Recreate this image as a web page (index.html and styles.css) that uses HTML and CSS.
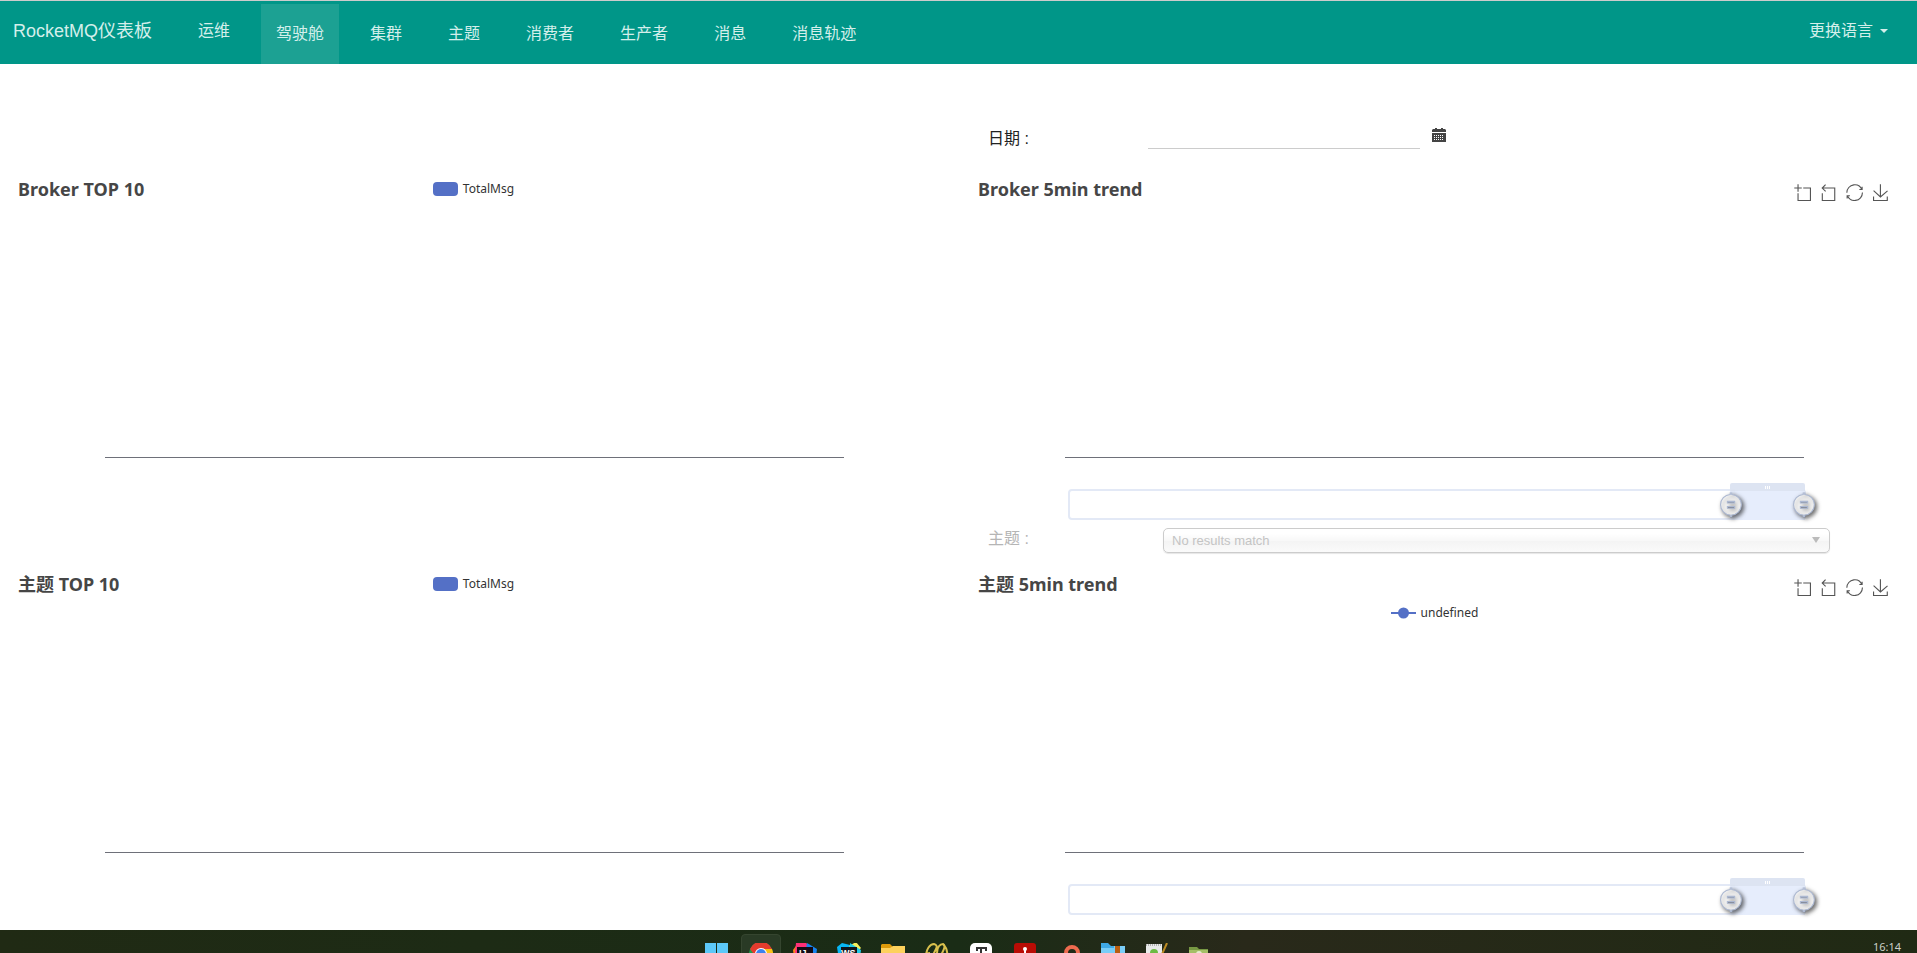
FILE: index.html
```html
<!DOCTYPE html>
<html lang="zh-CN">
<head>
<meta charset="utf-8">
<title>RocketMQ仪表板</title>
<link rel="stylesheet" href="styles.css">
</head>
<body>
<svg class="defs" aria-hidden="true">
  <symbol id="i-zoom" viewBox="-1 -1 61 61"><path d="M0,13.5h26.9 M13.5,26.9V0 M32.1,13.5H58V58H13.5 V32.1"/></symbol>
  <symbol id="i-back" viewBox="2 -1 61 61"><path d="M22,1.4L9.9,13.5l12.3,12.3 M10.3,13.5H54.9v44.6 H10.3v-26"/></symbol>
  <symbol id="i-restore" viewBox="-1 -1 61 61"><path d="M47,18.9h9.8V8.7 M56.3,20.1 C52.1,9,40.5,0.6,26.8,2.1C12.6,3.7,1.6,16.2,2.1,30.6 M13,41.1H3.1v10.2 M3.7,39.9c4.2,11.1,15.8,19.5,29.5,18 c14.2-1.6,25.2-14.1,24.7-28.5"/></symbol>
  <symbol id="i-save" viewBox="-1 -1 61 61"><path d="M4.7,22.9L29.3,45.5L54.7,23.4M4.6,43.6L4.6,58L53.8,58L53.8,43.6M29.2,45.1L29.2,0"/></symbol>
  <symbol id="i-handle" viewBox="0 10 20 23"><path d="M10.7,11.9v-1.3H9.3v1.3c-4.9,0.3-8.8,4.4-8.8,9.4c0,5,3.9,9.1,8.8,9.4v1.3h1.3v-1.3c4.9-0.3,8.8-4.4,8.8-9.4C19.5,16.3,15.6,12.2,10.7,11.9z M13.3,24.4H6.7V23h6.6V24.4z M13.3,19.6H6.7v-1.4h6.6V19.6z"/></symbol>
</svg>

<header class="navbar">
  <a class="nav-link brand" href="#">RocketMQ仪表板</a>
  <a class="nav-link" href="#">运维</a>
  <nav class="tabs">
    <a class="nav-link active" href="#">驾驶舱</a>
    <a class="nav-link" href="#">集群</a>
    <a class="nav-link" href="#">主题</a>
    <a class="nav-link" href="#">消费者</a>
    <a class="nav-link" href="#">生产者</a>
    <a class="nav-link" href="#">消息</a>
    <a class="nav-link" href="#">消息轨迹</a>
  </nav>
  <button class="lang" type="button">更换语言<span class="caret"></span></button>
</header>

<main class="dashboard">
  <form class="filter filter-date">
    <label for="date">日期 :</label>
    <input id="date" type="text">
    <button class="calendar" type="button" aria-label="日历">
      <svg viewBox="0 0 14 15"><path fill="#444" d="M1 1h2V0h2v1h4V0h2v1h2l1 1v2H0V2zM0 5h14v9H0z"/><path stroke="#fff" stroke-dasharray="1 1" d="M2 7.500h10M2 9.500h10M2 11.500h10"/></svg>
    </button>
  </form>

  <section class="chart chart-left">
    <div class="chart-head">
      <h2>Broker TOP 10</h2>
      <div class="legend"><span class="swatch"></span>TotalMsg</div>
    </div>
    <div class="plot"></div>
  </section>

  <section class="chart">
    <div class="chart-head">
      <h2>Broker 5min trend</h2>
      <div class="toolbox">
        <button type="button" aria-label="zoom"><svg><use href="#i-zoom"/></svg></button>
        <button type="button" aria-label="back"><svg><use href="#i-back"/></svg></button>
        <button type="button" aria-label="restore"><svg><use href="#i-restore"/></svg></button>
        <button type="button" aria-label="save"><svg><use href="#i-save"/></svg></button>
      </div>
    </div>
    <div class="plot"></div>
    <div class="slider">
      <div class="window">
        <div class="grip"><i></i><i></i><i></i></div>
        <svg class="handle start"><use class="face" href="#i-handle"/><use class="rim" href="#i-handle"/></svg>
        <svg class="handle end"><use class="face" href="#i-handle"/><use class="rim" href="#i-handle"/></svg>
      </div>
    </div>
  </section>

  <form class="filter filter-topic">
    <label for="topic">主题 :</label>
    <div class="select-box">
      <select id="topic" disabled><option>No results match</option></select>
    </div>
  </form>

  <section class="chart chart-left">
    <div class="chart-head">
      <h2>主题 TOP 10</h2>
      <div class="legend"><span class="swatch"></span>TotalMsg</div>
    </div>
    <div class="plot"></div>
  </section>

  <section class="chart">
    <div class="chart-head">
      <h2>主题 5min trend</h2>
      <div class="toolbox">
        <button type="button" aria-label="zoom"><svg><use href="#i-zoom"/></svg></button>
        <button type="button" aria-label="back"><svg><use href="#i-back"/></svg></button>
        <button type="button" aria-label="restore"><svg><use href="#i-restore"/></svg></button>
        <button type="button" aria-label="save"><svg><use href="#i-save"/></svg></button>
      </div>
    </div>
    <div class="legend legend-line"><svg class="marker" viewBox="0 0 25 12"><path stroke="#5470c6" stroke-width="2" d="M0 6h25"/><circle cx="12.500" cy="6" r="5.500" fill="#5470c6"/></svg>undefined</div>
    <div class="plot"></div>
    <div class="slider">
      <div class="window">
        <div class="grip"><i></i><i></i><i></i></div>
        <svg class="handle start"><use class="face" href="#i-handle"/><use class="rim" href="#i-handle"/></svg>
        <svg class="handle end"><use class="face" href="#i-handle"/><use class="rim" href="#i-handle"/></svg>
      </div>
    </div>
  </section>
</main>

<footer class="taskbar">
  <div class="apps">
    <span class="app"><svg viewBox="0 0 24 24"><path fill="#5cc8f8" d="M0 0h11v11H0zM12 0h11v11H12zM0 12h11v11H0zM12 12h11v11H12z"/></svg></span>
    <span class="app current"><svg viewBox="0 0 24 24"><circle cx="12" cy="11" r="12" fill="#1e9b4b"/><path fill="#e33b2e" d="M1 6a12 12 0 0 1 22 0H12L7 14z"/><path fill="#fbc116" d="M12 6h11a12 12 0 0 1-10 17l5-9z"/><circle cx="12" cy="11" r="6" fill="#fff"/><circle cx="12" cy="11" r="5" fill="#3b82f0"/></svg></span>
    <span class="app"><svg viewBox="0 0 24 24"><path fill="#fc801d" d="M0 7l5-7 7 5v18H2z"/><path fill="#fe2f76" d="M3 0l10-1 3 7-8 10-6-6z"/><path fill="#1683f0" d="M14 0l10 6-2 17H10z"/><path fill="#140a14" d="M4 4h16v16H4z"/><text x="6" y="13" fill="#fff">IJ</text></svg></span>
    <span class="app"><svg viewBox="0 0 24 24"><path fill="#08b7f5" d="M0 4l5-4 8 2v21H3z"/><path fill="#f4ef5c" d="M12 3l7-4 5 6-5 5z"/><path fill="#21cbea" d="M13 0l11 7-2 16H12z"/><path fill="#10151c" d="M4 4h16v16H4z"/><text x="4" y="13" fill="#fff">WS</text></svg></span>
    <span class="app"><svg viewBox="0 0 24 24"><path fill="#dd9a0a" d="M0 2l1-1h8l3 3v6H0z"/><path fill="#fdd15c" d="M0 5h9l3-2h12v18H0z"/></svg></span>
    <span class="app"><svg viewBox="0 0 24 24"><path stroke="#d9c04d" stroke-width="2" fill="none" d="M1 18v-4C1 6 5 1 9 1q4 1 2 5L7 14M5 10q-4 0-4 4M12 10c0-6 3-9 6-9 3 1 1 6-2 11M18 1c4 4 5 8 4 14"/></svg></span>
    <span class="app"><svg viewBox="0 0 24 24"><rect x="1" width="22" height="23" rx="5" fill="#fff"/><path stroke="#333" stroke-width="2" fill="none" d="M8 8V5h9v3M12 5v13"/></svg></span>
    <span class="app"><svg viewBox="0 0 24 24"><rect x="1" width="22" height="23" rx="3" fill="#b90c05"/><path stroke="#fff" stroke-width="2" fill="none" d="M12 6v5l-3 9M12 11l3 9"/><circle cx="12" cy="6" r="2" fill="#fff"/></svg></span>
    <span class="app"><svg viewBox="0 0 24 24"><path fill="#a93c22" d="M0 10h10v3H0z"/><circle cx="15" cy="10" r="6" fill="none" stroke="#ee6b4f" stroke-width="4"/></svg></span>
    <span class="app"><svg viewBox="0 0 24 24"><path fill="#3fa9e6" d="M0 0h7l3 3h14v20H0z"/><path fill="#79cdf7" d="M0 5h13V3h11v19H0z"/><path fill="#b85d11" d="M14 3h5v20h-5z"/></svg></span>
    <span class="app"><svg viewBox="0 0 24 24"><path fill="#e9eaea" d="M1 1h16v22H1z"/><path stroke="#777" stroke-dasharray="1 1" d="M1 2h16"/><circle cx="9" cy="10" r="4" fill="#6cbb42"/><path stroke="#bc8b22" stroke-width="2" d="M22 0l-8 18"/></svg></span>
    <span class="app"><svg viewBox="0 0 24 24"><path fill="#779843" d="M0 4h8l2 2h9v17H0z"/><path fill="#a4bf66" d="M0 7h19v16H0z"/><circle cx="10" cy="11" r="3" fill="#e4ecd0"/></svg></span>
  </div>
  <time class="clock">16:14</time>
</footer>
</body>
</html>
```
FILE: styles.css
```css
* { box-sizing: border-box; }

body {
  margin: 0;
  min-height: 100vh;
  display: flex;
  flex-direction: column;
  background: #fff;
  color: #222;
  font: 16px/20px "Liberation Sans", "Noto Sans CJK SC", sans-serif;
}

button {
  padding: 0;
  border: 0;
  background: none;
  color: inherit;
  font: inherit;
}

.defs { position: absolute; width: 0; height: 0; }

/* Top navigation */
.navbar {
  display: flex;
  align-items: flex-start;
  gap: 16px;
  height: 64px;
  border-top: 1px solid #ccc;
  background: #009688;
  color: #d4efeb;
}

.nav-link {
  padding: 0 15px;
  color: inherit;
  line-height: 60px;
  text-decoration: none;
  white-space: nowrap;
}

.brand { padding-left: 13px; font-size: 18px; }
.tabs { display: flex; gap: 16px; padding-top: 3px; }
.active { background: #1ca193; }

.lang {
  display: flex;
  align-items: center;
  gap: 7px;
  height: 60px;
  margin-left: auto;
  padding-right: 29px;
}

.caret {
  border: 4px solid transparent;
  border-top-color: currentColor;
  border-bottom: 0;
}

/* Charts and filters */
.dashboard {
  flex: 1;
  display: grid;
  grid-template-columns: 1fr 1fr;
  grid-template-rows: 103px 355px 40px 355px;
  column-gap: 37px;
  padding: 0 21px 0 13px;
}

.filter {
  grid-column: 2;
  display: flex;
  padding-left: 15px;
}

.filter label { flex: none; }

.filter-date {
  align-items: flex-end;
  padding-bottom: 18px;
}

.filter-date label { width: 160px; }

.filter-date input {
  width: 30%;
  height: 26px;
  padding: 0 2px;
  border: 0;
  border-bottom: 1px solid #ccc;
  background: none;
  font: inherit;
}

.calendar { padding: 0 0 6px 12px; }
.calendar svg { display: block; width: 14px; height: 15px; }

.filter-topic {
  align-items: flex-start;
  padding: 6px 66px 0 15px;
}

.filter-topic label { width: 175px; line-height: 22px; color: #b5b5b5; }

.select-box { flex: 1; position: relative; }

.select-box::after {
  content: "";
  position: absolute;
  top: 9px;
  right: 10px;
  border: 4px solid transparent;
  border-top: 6px solid #bbb;
  border-bottom: 0;
}

.select-box select {
  display: block;
  width: 100%;
  height: 25px;
  padding: 0 8px;
  appearance: none;
  border: 1px solid #ccc;
  border-radius: 5px;
  background: linear-gradient(#fff 20%, #f8f8f8 50%, #f4f4f4 52%, #fafafa);
  box-shadow: 0 1px 1px rgba(0, 0, 0, 0.1);
  color: #c4c4c4;
  opacity: 1;
  font: 13px "Liberation Sans", sans-serif;
}

.chart {
  display: flex;
  flex-direction: column;
  font-family: "Noto Sans", "Noto Sans CJK SC", sans-serif;
}

.chart-left { grid-column: 1; padding-bottom: 64px; }

.chart-head {
  display: grid;
  grid-template-columns: 1fr auto 1fr;
  padding: 10px 7px 0 5px;
}

.chart h2 {
  margin: 0;
  color: #464646;
  font-size: 18px;
  line-height: 24px;
}

.legend {
  display: flex;
  align-items: center;
  gap: 5px;
  color: #333;
  font-size: 12px;
}

.legend-line { align-self: center; height: 20px; margin-top: 7px; }
.swatch { width: 25px; height: 14px; border-radius: 4px; background: #5470c6; }
.marker { width: 25px; height: 12px; }

.toolbox {
  grid-column: 3;
  justify-self: end;
  display: flex;
  align-items: flex-end;
  gap: 9px;
}

.toolbox svg {
  display: block;
  width: 17px;
  height: 17px;
  fill: none;
  stroke: #555;
  stroke-width: 4;
}

.plot {
  flex: 1;
  margin: 0 10%;
  border-bottom: 1px solid #6e7079;
}

.slider {
  position: relative;
  height: 31px;
  margin: 31px calc(10% - 2px) 2px calc(10% + 3px);
  border: 2px solid #e3e9f6;
  border-radius: 4px;
}

.window {
  position: absolute;
  top: -2px;
  bottom: -2px;
  left: 90%;
  right: -1px;
  background: #e6edfc;
}

.grip {
  position: absolute;
  top: -6px;
  left: 0;
  right: 0;
  display: flex;
  justify-content: center;
  align-items: center;
  gap: 1px;
  height: 8px;
  border-radius: 2px 2px 0 0;
  background: #dde4f2;
}

.grip i { width: 1px; height: 3px; background: #fff; }

.handle {
  position: absolute;
  top: 3px;
  width: 22px;
  height: 26px;
  overflow: visible;
}

.face { fill: #fff; filter: drop-shadow(2px 2px 2px rgba(0, 0, 0, 0.6)); }

.rim {
  fill: none;
  stroke: #acb8d1;
  filter: drop-shadow(2px 2px 2px rgba(0, 0, 0, 0.5));
}

.start { left: -10px; }
.end { right: -10px; }

/* Desktop taskbar */
.taskbar {
  display: grid;
  grid-template-columns: 1fr auto 1fr;
  height: 23px;
  overflow: hidden;
  background: linear-gradient(90deg, #202a14, #1a2c16 50%, #29291a 65%, #202a14);
}

.apps { grid-column: 2; display: flex; gap: 4px; padding-top: 4px; }

.app {
  width: 40px;
  height: 40px;
  padding: 8px 7px;
  border: 1px solid transparent;
  border-radius: 4px;
}

.app svg { display: block; width: 24px; height: 24px; }
.app text { font: bold 9px "Liberation Sans", sans-serif; }
.current { border-color: #35452f; background: #293a25; }

.clock {
  justify-self: end;
  padding: 7px 16px 0 0;
  color: #ccd0c8;
  font: 11px/20px "Noto Sans", sans-serif;
}
```
